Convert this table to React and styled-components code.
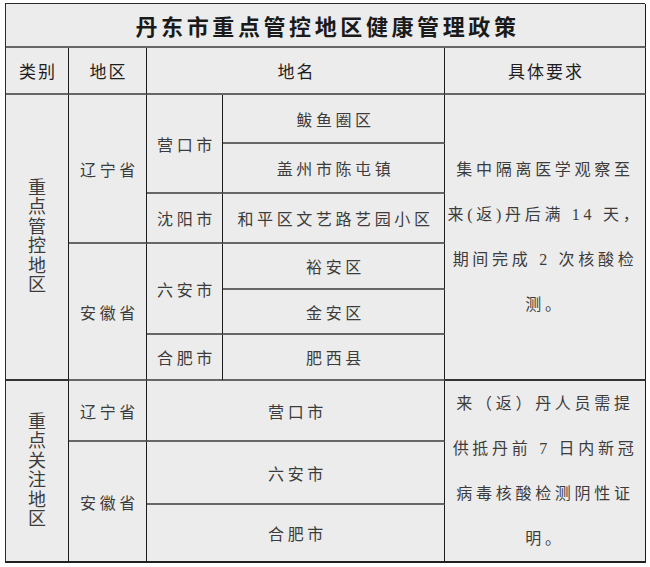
import React from 'react';
import styled, { createGlobalStyle } from 'styled-components';

const GlobalStyle = createGlobalStyle`
  html, body {
    margin: 0;
    padding: 0;
    background: #ffffff;
  }
  body {
    font-family: "Liberation Serif", "Noto Sans CJK SC", serif;
  }
`;

const requirementA = [
  '集中隔离医学观察至',
  '来(返)丹后满 14 天，',
  '期间完成 2 次核酸检',
  '测。',
];

const requirementB = [
  '来（返）丹人员需提',
  '供抵丹前 7 日内新冠',
  '病毒核酸检测阴性证',
  '明。',
];

const App = () => (
  <>
    <GlobalStyle />
    <Sheet>
      <Title>丹东市重点管控地区健康管理政策</Title>

      <Head>类别</Head>
      <Head>地区</Head>
      <Head span={2}>地名</Head>
      <Head>具体要求</Head>

      <Category rows="3 / 9">
        <Vertical>重点管控地区</Vertical>
      </Category>
      <Cell col="2" rows="3 / 6">辽宁省</Cell>
      <Cell col="3" rows="3 / 5">营口市</Cell>
      <Cell col="4" rows="3">鲅鱼圈区</Cell>
      <Cell col="4" rows="4">盖州市陈屯镇</Cell>
      <Cell col="3" rows="5">沈阳市</Cell>
      <Cell col="4" rows="5">和平区文艺路艺园小区</Cell>
      <Cell col="2" rows="6 / 9">安徽省</Cell>
      <Cell col="3" rows="6 / 8">六安市</Cell>
      <Cell col="4" rows="6">裕安区</Cell>
      <Cell col="4" rows="7">金安区</Cell>
      <Cell col="3" rows="8">合肥市</Cell>
      <Cell col="4" rows="8">肥西县</Cell>
      <Requirement rows="3 / 9">
        {requirementA.map((line, i) => (
          <Line key={i}>{line}</Line>
        ))}
      </Requirement>

      <Category rows="9 / 12" last>
        <Vertical>重点关注地区</Vertical>
      </Category>
      <Cell col="2" rows="9">辽宁省</Cell>
      <Cell col="3 / 5" rows="9">营口市</Cell>
      <Cell col="2" rows="10 / 12" last>安徽省</Cell>
      <Cell col="3 / 5" rows="10">六安市</Cell>
      <Cell col="3 / 5" rows="11" last>合肥市</Cell>
      <Requirement rows="9 / 12" last>
        {requirementB.map((line, i) => (
          <Line key={i}>{line}</Line>
        ))}
      </Requirement>
    </Sheet>
  </>
);

const Sheet = styled.div`
  margin: 3px 0 0 5px;
  width: 640px;
  box-sizing: border-box;
  display: grid;
  grid-template-columns: 63px 78px 76px 222px 201px;
  grid-template-rows: 44px 47px 49px 50px 50px 46px 45px 46px 61px 63px 58px;
  border-top: 1px solid #2a2a2a;
  border-left: 1px solid #2a2a2a;
  background: #ececec;
`;

const Box = styled.div`
  box-sizing: border-box;
  border-right: 1px solid #1c1c1c;
  border-bottom: 2px solid ${p => (p.last ? '#222' : '#666')};
  display: flex;
  align-items: center;
  justify-content: center;
  color: #3c3c3c;
  min-width: 0;
`;

const Title = styled(Box)`
  grid-column: 1 / -1;
  font-size: 22px;
  font-weight: 700;
  letter-spacing: 3.6px;
  padding-left: 4px;
  color: #1a1a1a;
`;

const Head = styled(Box)`
  grid-column: span ${p => p.span || 1};
  font-size: 17px;
  font-weight: 400;
  letter-spacing: 2px;
  padding-left: 2px;
  color: #1e1e1e;
`;

const Cell = styled(Box)`
  grid-column: ${p => p.col};
  grid-row: ${p => p.rows};
  font-size: 16px;
  letter-spacing: 3.6px;
  padding-left: 4px;
`;

const Category = styled(Box)`
  grid-column: 1;
  grid-row: ${p => p.rows};
  border-bottom-color: ${p => (p.last ? '#222' : '#333')};
`;

const Vertical = styled.div`
  width: 18px;
  font-size: 18px;
  line-height: 19.5px;
  word-break: break-all;
  text-align: center;
  color: #3c3c3c;
`;

const Requirement = styled(Box)`
  grid-column: 5;
  grid-row: ${p => p.rows};
  flex-direction: column;
  font-size: 16px;
  line-height: 45px;
  border-bottom-color: ${p => (p.last ? '#222' : '#333')};
`;

const Line = styled.div`
  letter-spacing: 3.7px;
  white-space: nowrap;
  text-align: center;
`;

export default App;
